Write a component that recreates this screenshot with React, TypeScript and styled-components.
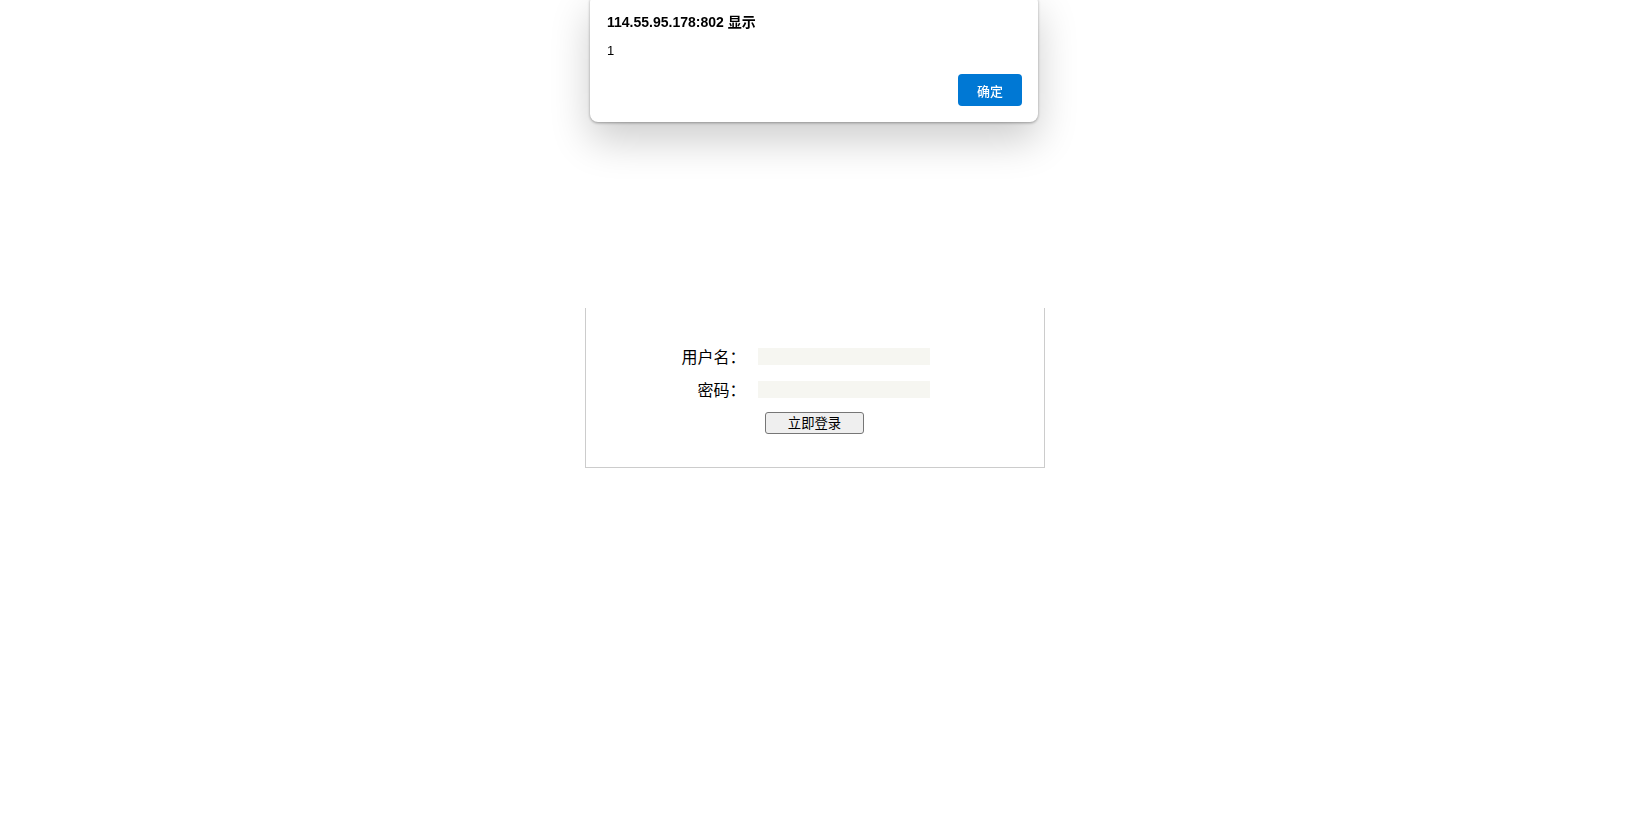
import React from "react";
import styled, { createGlobalStyle } from "styled-components";

const GlobalStyle = createGlobalStyle`
  html, body {
    margin: 0;
    padding: 0;
    background: #ffffff;
  }
  body {
    font-family: "Noto Sans CJK SC", "Liberation Sans", sans-serif;
    color: #000;
  }
`;

const Page = styled.div`
  width: 100%;
  min-height: 822px;
  padding-top: 308px;
  box-sizing: border-box;
`;

const Panel = styled.div`
  width: 458px;
  margin: 0 auto;
  border: 1px solid #cccccc;
  border-top: none;
  padding: 40px 0 33px;
  display: flex;
  flex-direction: column;
`;

const Fields = styled.div`
  display: grid;
  grid-template-columns: 160px 172px;
  column-gap: 12px;
  row-gap: 16px;
  align-items: center;
`;

const Label = styled.label`
  justify-self: end;
  font-family: "Noto Sans CJK SC", sans-serif;
  font-size: 16px;
  line-height: 17px;
  height: 17px;
  color: #000;
  white-space: nowrap;
`;

const Input = styled.input`
  width: 172px;
  height: 17px;
  box-sizing: border-box;
  border: none;
  outline: none;
  background: #f6f6f1;
  padding: 0 2px;
  font-size: 13px;
`;

const SubmitButton = styled.button`
  align-self: center;
  margin-top: 14px;
  width: 99px;
  height: 22px;
  box-sizing: border-box;
  background: #efefef;
  border: 1px solid #767676;
  border-radius: 3px;
  font-family: "Noto Sans CJK SC", sans-serif;
  font-size: 13.33px;
  line-height: 18px;
  color: #000;
  padding: 0 6px;
  cursor: pointer;
`;

const Dialog = styled.div`
  position: fixed;
  top: -6px;
  left: 590px;
  width: 448px;
  box-sizing: border-box;
  background: #ffffff;
  border-radius: 8px;
  padding: 18px 16px 16px 17px;
  box-shadow: 0 1px 3px rgba(0, 0, 0, 0.35), 0 18px 40px rgba(0, 0, 0, 0.2);
  font-family: "Liberation Sans", "Noto Sans CJK SC", sans-serif;
  display: flex;
  flex-direction: column;
`;

const DialogTitle = styled.div`
  font-size: 14px;
  font-weight: bold;
  line-height: 20px;
  color: #000;
`;

const DialogMessage = styled.div`
  margin-top: 10px;
  font-size: 13px;
  line-height: 18px;
  color: #000;
`;

const DialogActions = styled.div`
  display: flex;
  justify-content: flex-end;
  margin-top: 14px;
`;

const OkButton = styled.button`
  width: 64px;
  height: 32px;
  border: none;
  border-radius: 4px;
  background: #0078d4;
  color: #ffffff;
  font-family: "Noto Sans CJK SC", sans-serif;
  font-size: 13px;
  font-weight: 500;
  cursor: pointer;
`;

export default function App() {
  return (
    <>
      <GlobalStyle />
      <Page>
        <Panel>
          <Fields>
            <Label>用户名：</Label>
            <Input type="text" />
            <Label>密码：</Label>
            <Input type="password" />
          </Fields>
          <SubmitButton type="button">立即登录</SubmitButton>
        </Panel>
      </Page>
      <Dialog>
        <DialogTitle>114.55.95.178:802 显示</DialogTitle>
        <DialogMessage>1</DialogMessage>
        <DialogActions>
          <OkButton type="button">确定</OkButton>
        </DialogActions>
      </Dialog>
    </>
  );
}
